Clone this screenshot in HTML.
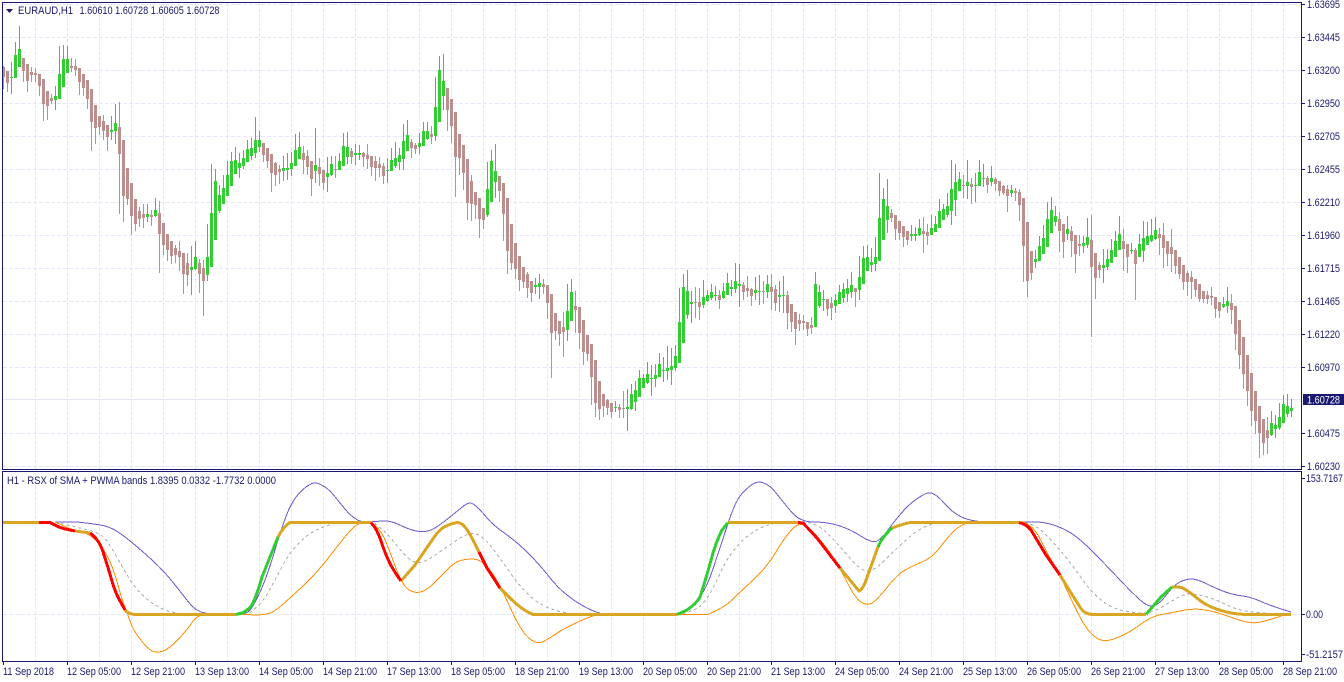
<!DOCTYPE html>
<html><head><meta charset="utf-8"><title>EURAUD,H1</title>
<style>
html,body{margin:0;padding:0;background:#fff;overflow:hidden}
svg{display:block}
text{font-family:"Liberation Sans",sans-serif;font-size:11px;fill:#191970}
.c path{fill:none;shape-rendering:crispEdges}
</style></head><body>
<svg width="1344" height="682" viewBox="0 0 1344 682" xmlns="http://www.w3.org/2000/svg">
<rect width="1344" height="682" fill="#fff"/>
<!-- grid -->
<g stroke="#e6e6fa" stroke-width="1" stroke-dasharray="4 2" fill="none" shape-rendering="crispEdges">
<path d="M3 4.5H1301M3 37.5H1301M3 70.5H1301M3 103.5H1301M3 136.5H1301M3 169.5H1301M3 202.5H1301M3 235.5H1301M3 268.5H1301M3 301.5H1301M3 334.5H1301M3 367.5H1301M3 433.5H1301M3 466.5H1301"/>
<path d="M35.5 3V469M67.5 3V469M99.5 3V469M131.5 3V469M163.5 3V469M195.5 3V469M227.5 3V469M259.5 3V469M291.5 3V469M323.5 3V469M355.5 3V469M387.5 3V469M419.5 3V469M451.5 3V469M483.5 3V469M515.5 3V469M547.5 3V469M579.5 3V469M611.5 3V469M643.5 3V469M675.5 3V469M707.5 3V469M739.5 3V469M771.5 3V469M803.5 3V469M835.5 3V469M867.5 3V469M899.5 3V469M931.5 3V469M963.5 3V469M995.5 3V469M1027.5 3V469M1059.5 3V469M1091.5 3V469M1123.5 3V469M1155.5 3V469M1187.5 3V469M1219.5 3V469M1251.5 3V469M1283.5 3V469"/>
<path d="M35.5 473V661M67.5 473V661M99.5 473V661M131.5 473V661M163.5 473V661M195.5 473V661M227.5 473V661M259.5 473V661M291.5 473V661M323.5 473V661M355.5 473V661M387.5 473V661M419.5 473V661M451.5 473V661M483.5 473V661M515.5 473V661M547.5 473V661M579.5 473V661M611.5 473V661M643.5 473V661M675.5 473V661M707.5 473V661M739.5 473V661M771.5 473V661M803.5 473V661M835.5 473V661M867.5 473V661M899.5 473V661M931.5 473V661M963.5 473V661M995.5 473V661M1027.5 473V661M1059.5 473V661M1091.5 473V661M1123.5 473V661M1155.5 473V661M1187.5 473V661M1219.5 473V661M1251.5 473V661M1283.5 473V661"/>
<path d="M3 614.5H1301"/>
</g>
<path d="M3 399.5H1301" stroke="#e6e6fa" stroke-width="1" shape-rendering="crispEdges"/>
<!-- candles -->
<g class="c">
<path stroke="#bc8f8f" stroke-width="1" d="M3.5 66V89M7.5 71V92M23.5 58V82M27.5 64V92M31.5 67V82M35.5 68V82M39.5 74V96M43.5 79V121M47.5 91V120M51.5 94V104M71.5 58V72M75.5 59V76M79.5 68V95M83.5 74V96M87.5 80V109M91.5 89V151M95.5 105V144M99.5 116V135M103.5 115V140M107.5 125V151M119.5 102V214M123.5 140V222M127.5 168V205M131.5 183V235M135.5 199V231M139.5 207V227M143.5 204V228M151.5 210V226M159.5 201V273M163.5 223V255M167.5 234V261M171.5 241V264M175.5 245V263M179.5 241V271M183.5 253V294M187.5 253V286M199.5 259V293M203.5 260V316M263.5 143V162M267.5 148V168M271.5 154V192M275.5 162V186M279.5 165V184M303.5 146V174M307.5 150V175M311.5 161V196M319.5 158V186M323.5 170V190M335.5 156V178M351.5 148V164M363.5 152V167M367.5 144V169M371.5 156V176M375.5 156V181M379.5 157V177M383.5 163V184M411.5 139V158M415.5 143V154M431.5 126V144M447.5 88V131M451.5 99V143M455.5 112V197M459.5 134V175M463.5 145V190M467.5 159V220M471.5 175V221M475.5 192V219M479.5 198V238M483.5 208V229M499.5 176V202M503.5 183V241M507.5 198V274M511.5 224V270M515.5 243V279M519.5 256V291M523.5 267V288M527.5 272V298M531.5 281V302M543.5 279V294M547.5 285V319M551.5 294V378M555.5 313V340M559.5 321V346M563.5 312V357M575.5 291V333M579.5 307V349M583.5 320V365M587.5 335V361M591.5 344V405M595.5 360V417M599.5 381V420M603.5 394V417M607.5 399V415M611.5 403V418M619.5 404V418M623.5 391V418M695.5 287V318M699.5 288V320M719.5 290V309M743.5 282V300M747.5 276V297M751.5 288V306M763.5 281V304M771.5 274V310M775.5 285V311M787.5 291V329M791.5 304V332M795.5 312V345M799.5 314V331M803.5 315V330M807.5 322V336M811.5 317V334M827.5 299V316M831.5 297V320M855.5 288V307M891.5 209V222M895.5 215V240M899.5 221V240M903.5 226V247M907.5 231V245M923.5 217V253M927.5 224V245M963.5 175V198M971.5 178V204M987.5 176V193M995.5 177V191M999.5 181V196M1003.5 185V195M1007.5 185V212M1015.5 188V201M1019.5 189V221M1023.5 198V282M1027.5 222V297M1031.5 251V280M1059.5 212V252M1063.5 224V258M1071.5 226V257M1075.5 235V273M1079.5 235V256M1091.5 215V337M1095.5 253V299M1099.5 262V278M1123.5 229V271M1127.5 244V273M1135.5 248V300M1159.5 228V255M1163.5 223V268M1167.5 241V266M1171.5 229V272M1175.5 250V274M1179.5 257V279M1183.5 265V290M1187.5 271V296M1191.5 271V299M1195.5 279V297M1199.5 284V302M1203.5 291V303M1207.5 291V304M1211.5 287V305M1215.5 297V318M1219.5 302V318M1231.5 294V324M1235.5 306V350M1239.5 320V369M1243.5 337V389M1247.5 355V406M1251.5 373V426M1255.5 391V434M1259.5 406V458M1263.5 419V455M1267.5 417V454"/>
<path stroke="#bc8f8f" stroke-width="3" d="M3.5 67V77M7.5 71V83M23.5 58V71M27.5 64V81M31.5 72V75M35.5 73V75M39.5 74V86M43.5 79V104M47.5 91V106M51.5 98V101M71.5 66V68M75.5 66V70M79.5 68V82M83.5 74V88M87.5 80V99M91.5 89V122M95.5 105V128M99.5 116V127M103.5 121V131M107.5 125V137M119.5 127V154M123.5 140V196M127.5 168V199M131.5 183V216M135.5 199V224M139.5 211V219M143.5 214V218M151.5 215V217M159.5 213V234M163.5 223V245M167.5 234V250M171.5 241V256M175.5 248V255M179.5 251V257M183.5 253V274M187.5 263V275M199.5 263V274M203.5 268V281M263.5 143V155M267.5 148V161M271.5 154V173M275.5 163V175M279.5 169V172M303.5 153V160M307.5 156V167M311.5 161V179M319.5 167V174M323.5 170V183M335.5 169V170M351.5 151V157M363.5 153V157M367.5 155V159M371.5 156V167M375.5 161V168M379.5 164V168M383.5 166V176M411.5 142V148M415.5 145V149M431.5 134V137M447.5 88V110M451.5 99V126M455.5 112V157M459.5 134V158M463.5 145V173M467.5 159V203M471.5 181V204M475.5 192V205M479.5 198V219M483.5 208V220M499.5 176V191M503.5 183V214M507.5 198V251M511.5 224V263M515.5 243V269M519.5 256V280M523.5 267V282M527.5 274V288M531.5 281V293M543.5 284V287M547.5 285V303M551.5 294V333M555.5 313V331M559.5 321V334M563.5 327V332M575.5 306V310M579.5 307V333M583.5 320V352M587.5 335V354M591.5 344V377M595.5 360V403M599.5 381V409M603.5 394V406M607.5 400V408M611.5 403V412M619.5 407V410M623.5 408V409M695.5 302V303M699.5 302V307M719.5 295V300M743.5 285V292M747.5 288V291M751.5 289V296M763.5 291V292M771.5 287V292M775.5 289V303M787.5 295V313M791.5 304V322M795.5 312V329M799.5 320V324M803.5 321V323M807.5 322V329M811.5 325V328M827.5 299V309M831.5 303V308M855.5 288V292M891.5 213V218M895.5 215V229M899.5 221V233M903.5 226V237M907.5 231V240M923.5 231V234M927.5 232V236M963.5 185V186M971.5 184V187M987.5 178V185M995.5 179V184M999.5 181V191M1003.5 186V193M1007.5 189V196M1015.5 191V193M1019.5 192V205M1023.5 198V246M1027.5 222V281M1031.5 251V273M1059.5 219V231M1063.5 224V242M1071.5 231V241M1075.5 235V254M1079.5 244V246M1091.5 240V267M1095.5 253V278M1099.5 265V270M1123.5 241V249M1127.5 244V257M1135.5 250V264M1159.5 234V238M1163.5 235V248M1167.5 241V254M1171.5 247V254M1175.5 250V266M1179.5 257V274M1183.5 265V282M1187.5 273V282M1191.5 277V282M1195.5 279V290M1199.5 284V299M1203.5 291V299M1207.5 295V299M1211.5 296V298M1215.5 297V309M1219.5 302V311M1231.5 303V310M1235.5 306V334M1239.5 320V355M1243.5 337V374M1247.5 355V391M1251.5 373V411M1255.5 391V421M1259.5 406V433M1263.5 419V443M1267.5 430V438"/>
<path stroke="#32cd32" stroke-width="1" d="M11.5 62V94M15.5 42V78M19.5 26V67M55.5 86V110M59.5 46V99M63.5 45V87M67.5 46V73M111.5 116V140M115.5 104V144M147.5 204V222M155.5 198V217M191.5 246V295M195.5 241V270M207.5 224V281M211.5 164V267M215.5 169V240M219.5 185V213M223.5 175V204M227.5 161V196M231.5 152V186M235.5 147V174M239.5 153V178M243.5 150V169M247.5 140V162M251.5 138V160M255.5 117V158M259.5 131V152M283.5 156V181M287.5 153V180M291.5 152V176M295.5 134V166M299.5 132V159M315.5 128V183M327.5 157V192M331.5 156V176M339.5 153V170M343.5 133V166M347.5 132V164M355.5 144V165M359.5 145V160M387.5 158V183M391.5 148V171M395.5 142V168M399.5 148V170M403.5 124V170M407.5 120V151M419.5 133V154M423.5 122V146M427.5 122V140M435.5 77V141M439.5 56V122M443.5 54V110M487.5 162V217M491.5 150V202M495.5 144V198M535.5 278V294M539.5 274V299M567.5 284V341M571.5 279V321M615.5 401V412M627.5 389V431M631.5 384V410M635.5 381V411M639.5 370V397M643.5 374V388M647.5 362V384M651.5 365V396M655.5 364V387M659.5 353V377M663.5 357V382M667.5 346V380M671.5 348V385M675.5 345V371M679.5 288V363M683.5 274V343M687.5 270V319M691.5 291V323M703.5 280V308M707.5 290V302M711.5 284V300M715.5 286V301M723.5 283V299M727.5 273V295M731.5 280V296M735.5 263V293M739.5 264V307M755.5 277V300M759.5 275V305M767.5 275V298M779.5 281V312M783.5 276V313M815.5 272V327M819.5 285V308M823.5 290V311M835.5 294V313M839.5 285V304M843.5 283V303M847.5 279V302M851.5 272V298M859.5 256V300M863.5 246V284M867.5 245V271M871.5 248V272M875.5 237V271M879.5 173V261M883.5 188V240M887.5 179V233M911.5 225V241M915.5 227V241M919.5 219V236M931.5 215V235M935.5 216V232M939.5 199V228M943.5 204V220M947.5 193V217M951.5 160V225M955.5 164V216M959.5 172V191M967.5 160V199M975.5 173V202M979.5 160V186M983.5 164V187M991.5 166V186M1011.5 185V197M1035.5 250V268M1039.5 236V261M1043.5 225V254M1047.5 202V247M1051.5 197V233M1055.5 206V226M1067.5 216V240M1083.5 236V253M1087.5 218V248M1103.5 249V283M1107.5 249V270M1111.5 239V263M1115.5 231V257M1119.5 216V250M1131.5 243V254M1139.5 234V257M1143.5 221V262M1147.5 222V245M1151.5 219V242M1155.5 217V240M1223.5 297V308M1227.5 287V313M1271.5 411V436M1275.5 415V438M1279.5 403V430M1283.5 395V423M1287.5 394V417M1291.5 399V417"/>
<path stroke="#32cd32" stroke-width="3" d="M11.5 77V78M15.5 55V78M19.5 49V67M55.5 96V100M59.5 74V99M63.5 59V87M67.5 59V73M111.5 130V132M115.5 123V131M147.5 214V217M155.5 210V216M191.5 267V270M195.5 257V269M207.5 257V275M211.5 213V267M215.5 181V240M219.5 195V211M223.5 188V204M227.5 175V196M231.5 161V186M235.5 160V174M239.5 163V168M243.5 158V166M247.5 149V162M251.5 148V156M255.5 140V153M259.5 140V147M283.5 168V171M287.5 168V170M291.5 163V169M295.5 150V166M299.5 147V159M315.5 165V171M327.5 173V177M331.5 164V175M339.5 161V170M343.5 146V166M347.5 147V157M355.5 153V155M359.5 153V155M387.5 170V171M391.5 160V171M395.5 158V166M399.5 155V162M403.5 141V159M407.5 135V151M419.5 143V147M423.5 131V146M427.5 131V139M435.5 107V136M439.5 70V122M443.5 81V96M487.5 189V215M491.5 161V202M495.5 171V182M535.5 285V287M539.5 283V287M567.5 311V330M571.5 292V321M615.5 407V408M627.5 407V409M631.5 394V409M635.5 390V402M639.5 378V397M643.5 378V388M647.5 374V383M651.5 378V379M655.5 375V379M659.5 364V377M663.5 370V371M667.5 368V371M671.5 366V370M675.5 356V368M679.5 322V363M683.5 287V343M687.5 291V315M691.5 302V304M703.5 297V305M707.5 295V301M711.5 292V298M715.5 295V296M723.5 291V298M727.5 283V295M731.5 287V289M735.5 281V289M739.5 284V286M755.5 290V293M759.5 291V292M767.5 284V292M779.5 295V297M783.5 295V296M815.5 284V327M819.5 292V306M823.5 299V300M835.5 300V306M839.5 292V304M843.5 289V298M847.5 288V294M851.5 285V292M859.5 277V290M863.5 258V284M867.5 257V271M871.5 262V265M875.5 257V264M879.5 218V261M883.5 199V240M887.5 206V220M911.5 234V236M915.5 234V236M919.5 228V235M931.5 228V235M935.5 224V232M939.5 211V228M943.5 209V220M947.5 206V215M951.5 189V211M955.5 182V200M959.5 179V191M967.5 182V186M975.5 185V186M979.5 172V186M983.5 178V179M991.5 178V182M1011.5 190V193M1035.5 259V262M1039.5 246V261M1043.5 238V254M1047.5 219V247M1051.5 210V233M1055.5 216V222M1067.5 229V234M1083.5 243V246M1087.5 237V245M1103.5 265V268M1107.5 259V267M1111.5 250V263M1115.5 241V257M1119.5 234V250M1131.5 250V251M1139.5 244V257M1143.5 238V251M1147.5 236V245M1151.5 235V241M1155.5 230V239M1223.5 304V307M1227.5 301V306M1271.5 423V435M1275.5 425V429M1279.5 417V428M1283.5 404V423M1287.5 406V414M1291.5 408V411"/>
</g>
<!-- indicator lines -->
<g fill="none" stroke-linejoin="round" shape-rendering="crispEdges">
<path stroke="#a9a9a9" stroke-width="1" stroke-dasharray="3 3" d="M55 522L76 527Q97 532 101 535Q105 538 109 544Q113 550 118 559Q123 568 128 576.5Q133 585 140 592.5Q147 600 153.5 604Q160 608 166.5 610.5Q173 613 190 614.5H248L255.5 608Q263 602 269 591Q275 580 281 568.5Q287 557 292 551Q297 545 302 540Q307 535 314.5 531Q322 527 331 524.5Q340 522 356 522L373 522L380 527.5Q387 533 398.5 547.5Q410 562 416.5 562.5Q423 563 431.5 557.5Q440 552 454 542Q468 532 475 533.5Q482 535 491 546.5Q500 558 510 572.5Q520 587 530 596Q540 605 551.5 609Q563 613 580 614.5H680Q690 612 696.5 608.5Q703 605 709 595Q715 585 721 571.5Q727 558 737 546.5Q747 535 758.5 529Q770 523 785 522H803Q817 523 827 533Q837 543 848.5 556.5Q860 570 866.5 571Q873 572 885 560Q897 548 907 539Q917 530 927 526Q937 522 955 522H1018Q1032 523 1039.5 529Q1047 535 1059 549Q1071 563 1081 577.5Q1091 592 1101 600Q1111 608 1122.5 610.5Q1134 613 1144 613Q1154 612 1162 607Q1170 602 1177 598Q1184 594 1190.5 594Q1197 594 1207 597Q1217 600 1227 605Q1237 610 1249 611.5Q1261 613 1280 614"/>
<path stroke="#6a5acd" stroke-width="1" d="M55 522H77Q97 524 105 526Q113 528 123 535.5Q133 543 146.5 555Q160 567 168.5 577Q177 587 184.5 597Q192 607 197 610Q202 613 208 613.5Q215 614.5 227 614.5H240Q247 614 250 610Q253 607 260 592Q267 577 275 550Q283 523 288 511.5Q293 500 299 493.5Q305 487 310 484.5Q315 481 321.5 485Q328 488 334 495.5Q340 503 345 509Q350 515 355 518.5Q360 522 366 522Q372 522 381 521Q390 520 401 525.5Q412 531 420 531.5Q428 532 434 528.5Q440 525 447.5 519Q455 513 461 508Q467 503 470 503Q473 503 478 508Q483 513 488 519Q493 525 505 533.5Q517 542 528.5 553.5Q540 565 548.5 576Q557 587 567 595Q577 603 587 608Q597 613 605 614.5H672Q680 614 686.5 610Q693 607 700 597Q707 587 713.5 567.5Q720 548 726.5 528Q733 508 737.5 500Q742 492 749.5 486.5Q757 480 763.5 483Q770 485 776.5 493.5Q783 502 791.5 512Q800 522 813.5 522Q827 522 838.5 525.5Q850 529 861.5 536.5Q873 544 878 540.5Q883 537 888 530Q893 523 901.5 513Q910 503 919 497.5Q928 491 932.5 493.5Q937 495 945 504Q953 513 961.5 517Q970 521 985 522H1024Q1039 521 1050 524Q1061 527 1070 532.5Q1079 538 1091.5 550.5Q1104 563 1120.5 580.5Q1137 598 1144 603Q1151 608 1156 605Q1161 602 1167.5 593.5Q1174 585 1180 582Q1186 579 1191.5 579Q1197 579 1207 584Q1217 589 1225.5 592Q1234 595 1242.5 596Q1251 597 1261 601.5Q1271 606 1291 612"/>
<path stroke="#ff8c00" stroke-width="1" d="M55 522L65 526.5Q75 531 82.5 532.5Q90 534 96.5 541Q103 548 108 557.5Q113 567 117.5 583.5Q122 600 124.5 606Q127 612 130 621Q133 630 140 639Q147 648 152 651Q157 653 163.5 651Q170 648 178.5 639Q187 630 192 622.5Q197 615 205 614.5H247Q260 615.5 266.5 614Q273 613 281.5 605.5Q290 598 302.5 586.5Q315 575 327.5 559Q340 543 346.5 535Q353 527 357.5 524.5Q362 522 371 522L376.5 527Q382 532 386 542Q390 552 396.5 569.5Q403 587 410 590.5Q417 594 423.5 591Q430 588 441.5 575.5Q453 563 459 561Q465 559 472.5 559Q480 559 486.5 566Q493 573 498 582.5Q503 592 512.5 612.5Q522 633 529.5 638.5Q537 645 543.5 641.5Q550 638 556.5 633.5Q563 629 578 622Q593 615 600 614.5H708L717.5 610Q727 605 732.5 599.5Q738 594 752.5 580.5Q767 567 775 553.5Q783 540 790.5 531Q798 522 804 525Q810 528 818.5 538Q827 548 833.5 558Q840 568 847.5 583Q855 598 861 602Q867 606 872 603Q877 600 887 587.5Q897 575 903.5 571Q910 567 921 562.5Q932 558 939.5 548Q947 538 953.5 531.5Q960 525 970 522H1024L1030 526Q1036 530 1041.5 541.5Q1047 553 1053.5 564Q1060 575 1068 592.5Q1076 610 1082.5 621.5Q1089 633 1096.5 638Q1104 643 1116.5 638Q1129 633 1140.5 624.5Q1152 616 1161.5 614.5Q1171 613 1182.5 610.5Q1194 608 1205.5 610Q1217 612 1233 618Q1249 624 1258 622.5Q1267 621 1287 614"/>
<g stroke-width="3">
<path stroke="#daa520" d="M3 522.5H39M75 531L90 533M125 610Q129 614.5 136 614.5H236M278 537Q283 527 290 522.5H371M401 581L415 565Q430 543 435 536Q440 529 445 526.5Q450 524 455 523Q460 521.5 464 526Q468 530 473.5 541L479 552M500 588L511 599Q522 610 533 614.5H677M728 522.5H798M840 568L859 591Q862 590 865 583L878 547M892 528Q903 524 910 522.5H1019M1060 575L1071 593L1080 607Q1084 614.5 1094 614.5H1146M1172 587Q1181 586 1186 590Q1191 593 1197.5 598.5Q1204 604 1212.5 607.5Q1221 611 1229 612.5Q1237 614.5 1250 614.5H1291"/>
<path stroke="#ff0000" d="M39 522.5H50L55 525Q60 528 67.5 529.5L75 531M90 533Q100 540 104 555Q108 567 111.5 579.5Q115 592 120 601L125 610M371 522.5L374.5 527Q378 532 381.5 542.5Q385 553 389 561.5Q393 570 401 581M479 552L487 568L500 588M798 522.5L803 523L817 538L840 568M1019 522.5Q1026 524 1031 530L1046 555L1060 575"/>
<path stroke="#32cd32" d="M236 614.5L243 612.7Q249 609 252 605Q258 592 262 577L278 537M677 614.5L687 610Q696 604 700 597Q708 572 713 553Q717 540 722 530L728 522.5M878 547Q882 537 892 528M1146 614.5L1161 597L1172 587"/>
</g>
</g>
<!-- frames -->
<g fill="none" stroke="#191970" stroke-width="1" shape-rendering="crispEdges">
<path d="M2.5 2.5H1301.5V469.5H2.5Z"/>
<path d="M2.5 471.5H1301.5V661.5H2.5Z"/>
<path d="M1302 4.5h3M1302 37.5h3M1302 70.5h3M1302 103.5h3M1302 136.5h3M1302 169.5h3M1302 202.5h3M1302 235.5h3M1302 268.5h3M1302 301.5h3M1302 334.5h3M1302 367.5h3M1302 433.5h3M1302 466.5h3M1302 478.5h3M1302 614.5h3M1302 654.5h3"/>
<path d="M3.5 662v3M67.5 662v3M131.5 662v3M195.5 662v3M259.5 662v3M323.5 662v3M387.5 662v3M451.5 662v3M515.5 662v3M579.5 662v3M643.5 662v3M707.5 662v3M771.5 662v3M835.5 662v3M899.5 662v3M963.5 662v3M1027.5 662v3M1091.5 662v3M1155.5 662v3M1219.5 662v3M1283.5 662v3"/>
</g>
<polygon points="6,9 13,9 9.5,13" fill="#191970"/>
<!-- labels -->
<g lengthAdjust="spacingAndGlyphs">
<text x="18" y="14" textLength="55" lengthAdjust="spacingAndGlyphs">EURAUD,H1</text>
<text x="79.5" y="14" textLength="140" lengthAdjust="spacingAndGlyphs">1.60610 1.60728 1.60605 1.60728</text>
<text x="7" y="484" textLength="269" lengthAdjust="spacingAndGlyphs">H1 - RSX of SMA + PWMA bands 1.8395 0.0332 -1.7732 0.0000</text>
<text x="1307" y="8" textLength="33" lengthAdjust="spacingAndGlyphs">1.63695</text>
<text x="1307" y="41" textLength="33" lengthAdjust="spacingAndGlyphs">1.63445</text>
<text x="1307" y="74" textLength="33" lengthAdjust="spacingAndGlyphs">1.63200</text>
<text x="1307" y="107" textLength="33" lengthAdjust="spacingAndGlyphs">1.62950</text>
<text x="1307" y="140" textLength="33" lengthAdjust="spacingAndGlyphs">1.62705</text>
<text x="1307" y="173" textLength="33" lengthAdjust="spacingAndGlyphs">1.62455</text>
<text x="1307" y="206" textLength="33" lengthAdjust="spacingAndGlyphs">1.62210</text>
<text x="1307" y="239" textLength="33" lengthAdjust="spacingAndGlyphs">1.61960</text>
<text x="1307" y="272" textLength="33" lengthAdjust="spacingAndGlyphs">1.61715</text>
<text x="1307" y="305" textLength="33" lengthAdjust="spacingAndGlyphs">1.61465</text>
<text x="1307" y="338" textLength="33" lengthAdjust="spacingAndGlyphs">1.61220</text>
<text x="1307" y="371" textLength="33" lengthAdjust="spacingAndGlyphs">1.60970</text>
<rect x="1303" y="394" width="41" height="11" fill="#191970"/>
<text x="1307" y="403.5" textLength="33" lengthAdjust="spacingAndGlyphs" style="fill:#fff">1.60728</text>
<text x="1307" y="437" textLength="33" lengthAdjust="spacingAndGlyphs">1.60475</text>
<text x="1307" y="470" textLength="33" lengthAdjust="spacingAndGlyphs">1.60230</text>
<text x="1306" y="482" textLength="37" lengthAdjust="spacingAndGlyphs">153.7167</text>
<text x="1306" y="618" textLength="17" lengthAdjust="spacingAndGlyphs">0.00</text>
<text x="1306" y="658" textLength="37" lengthAdjust="spacingAndGlyphs">-51.2157</text>
<text x="3" y="675" textLength="51" lengthAdjust="spacingAndGlyphs">11 Sep 2018</text>
<text x="67" y="675" textLength="54" lengthAdjust="spacingAndGlyphs">12 Sep 05:00</text>
<text x="131" y="675" textLength="54" lengthAdjust="spacingAndGlyphs">12 Sep 21:00</text>
<text x="195" y="675" textLength="54" lengthAdjust="spacingAndGlyphs">13 Sep 13:00</text>
<text x="259" y="675" textLength="54" lengthAdjust="spacingAndGlyphs">14 Sep 05:00</text>
<text x="323" y="675" textLength="54" lengthAdjust="spacingAndGlyphs">14 Sep 21:00</text>
<text x="387" y="675" textLength="54" lengthAdjust="spacingAndGlyphs">17 Sep 13:00</text>
<text x="451" y="675" textLength="54" lengthAdjust="spacingAndGlyphs">18 Sep 05:00</text>
<text x="515" y="675" textLength="54" lengthAdjust="spacingAndGlyphs">18 Sep 21:00</text>
<text x="579" y="675" textLength="54" lengthAdjust="spacingAndGlyphs">19 Sep 13:00</text>
<text x="643" y="675" textLength="54" lengthAdjust="spacingAndGlyphs">20 Sep 05:00</text>
<text x="707" y="675" textLength="54" lengthAdjust="spacingAndGlyphs">20 Sep 21:00</text>
<text x="771" y="675" textLength="54" lengthAdjust="spacingAndGlyphs">21 Sep 13:00</text>
<text x="835" y="675" textLength="54" lengthAdjust="spacingAndGlyphs">24 Sep 05:00</text>
<text x="899" y="675" textLength="54" lengthAdjust="spacingAndGlyphs">24 Sep 21:00</text>
<text x="963" y="675" textLength="54" lengthAdjust="spacingAndGlyphs">25 Sep 13:00</text>
<text x="1027" y="675" textLength="54" lengthAdjust="spacingAndGlyphs">26 Sep 05:00</text>
<text x="1091" y="675" textLength="54" lengthAdjust="spacingAndGlyphs">26 Sep 21:00</text>
<text x="1155" y="675" textLength="54" lengthAdjust="spacingAndGlyphs">27 Sep 13:00</text>
<text x="1219" y="675" textLength="54" lengthAdjust="spacingAndGlyphs">28 Sep 05:00</text>
<text x="1283" y="675" textLength="54" lengthAdjust="spacingAndGlyphs">28 Sep 21:00</text>
</g>
</svg>
</body></html>
